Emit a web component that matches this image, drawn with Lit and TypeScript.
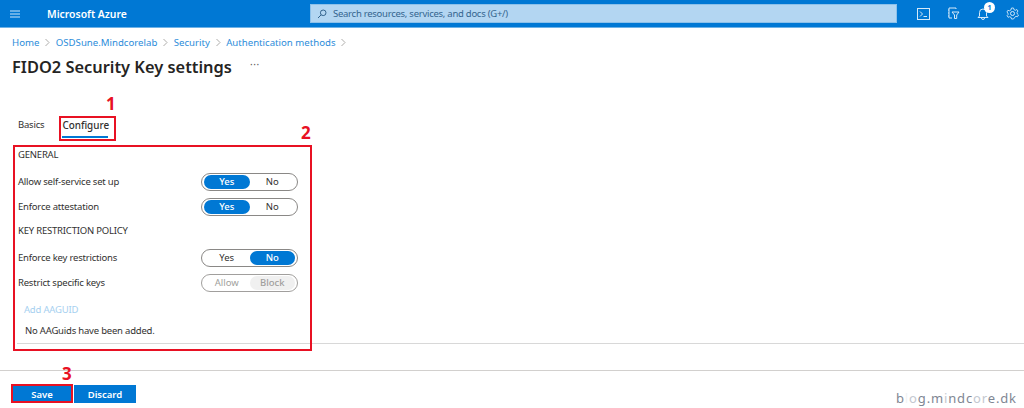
import { LitElement, html, css } from "lit";
import { customElement } from "lit/decorators.js";

const crumbs = ["Home", "OSDSune.Mindcorelab", "Security", "Authentication methods"];

@customElement("app-root")
export class AppRoot extends LitElement {
  static styles = css`
    :host { display: block; position: relative; width: 1024px; height: 408px; overflow: hidden; background: #fff; font-family: "Noto Sans", "Open Sans", sans-serif; color: #323130; font-size: 9.5px; letter-spacing: -0.2px; }
    svg { display: block; }
    .top { height: 27px; background: #0078d4; display: flex; align-items: center; border-bottom: 1px solid #6fb2e6; box-sizing: content-box; }
    .menu { margin-left: 9px; width: 12px; }
    .brand { margin-left: 26px; width: 263px; color: #fff; font-size: 10.4px; font-weight: 600; white-space: nowrap; letter-spacing: 0; }
    .search { width: 587px; height: 19px; background: #b3d6f2; border: 1px solid #8dc1ea; display: flex; align-items: center; gap: 6px; padding-left: 6px; box-sizing: border-box; color: #33658f; font-size: 9.5px; letter-spacing: -0.26px; }
    .icons { display: flex; align-items: center; margin-left: 20px; gap: 17px; }
    .bell { position: relative; }
    .badge { position: absolute; left: 7px; top: -5px; width: 11px; height: 11px; border-radius: 50%; background: #fff; color: #0078d4; font-size: 7px; font-weight: 700; display: flex; align-items: center; justify-content: center; letter-spacing: 0; }
    .crumbs { display: flex; align-items: center; gap: 4.7px; padding: 7px 0 0 12px; height: 14px; color: #0078d4; font-size: 9.65px; opacity: .85; white-space: nowrap; letter-spacing: 0; }
    .chev { width: 7px; }
    .titlebar { display: flex; align-items: center; padding: 5px 0 0 12px; height: 24px; }
    h1 { margin: 0; font-size: 16.4px; font-weight: 600; color: #252423; white-space: nowrap; letter-spacing: 0; }
    .more { margin-left: 18px; color: #605e5c; font-size: 10px; letter-spacing: 0.6px; line-height: 1; margin-bottom: 4px; }
    .tabs { display: flex; gap: 18px; margin: 40px 0 0 18px; height: 28px; }
    .tab { height: 18px; line-height: 14px; color: #323130; font-size: 9.5px; }
    .tab.on { font-weight: 500; font-size: 9.9px; letter-spacing: 0; border-bottom: 2px solid #0078d4; width: 46px; text-align: center; white-space: nowrap; }
    .form { margin: 0 0 0 18px; width: 280px; }
    .head { height: 23px; line-height: 17px; }
    .gap { margin-top: 3px; }
    .row { display: flex; justify-content: space-between; align-items: center; height: 25px; }
    .toggle { display: flex; width: 97px; height: 18px; box-sizing: border-box; border: 1px solid #8a8886; border-radius: 9px; padding: 1px 2px; letter-spacing: 0; }
    .opt { flex: 1; border-radius: 7px; display: flex; align-items: center; justify-content: center; color: #323130; }
    .opt.sel { background: #0078d4; color: #fff; font-weight: 500; }
    .toggle.off { border-color: #a19f9d; }
    .toggle.off .opt { color: #a19f9d; }
    .toggle.off .opt.sel { background: #f0f0f0; color: #a19f9d; }
    .add { margin: 8px 0 0 6px; color: #a6d0f0; height: 14px; line-height: 14px; }
    .none { margin: 7px 0 0 7px; height: 14px; line-height: 14px; }
    .rule1 { margin: 5px 0 0 17px; height: 1px; background: #d8d8d8; }
    .rule2 { margin-top: 26px; height: 1px; background: #d2d0ce; }
    .actions { display: flex; gap: 1px; margin: 14px 0 0 11px; }
    .btn { width: 62px; height: 18px; background: #0078d4; color: #fff; font-weight: 600; display: flex; align-items: center; justify-content: center; letter-spacing: 0; }
    .mark { position: absolute; border: 2px solid #e81123; box-sizing: border-box; pointer-events: none; }
    .m1 { left: 59px; top: 116px; width: 57px; height: 25px; }
    .m2 { left: 13px; top: 145px; width: 299px; height: 206px; }
    .m3 { left: 11px; top: 384px; width: 62px; height: 19px; }
    .num { position: absolute; color: #e81123; font-size: 17px; font-weight: 700; line-height: 1; letter-spacing: 0; }
    .n1 { left: 106px; top: 95px; }
    .n2 { left: 301px; top: 124px; }
    .n3 { left: 62px; top: 365px; }
    .wm { position: absolute; left: 896px; top: 389px; font-size: 13px; color: #7f8693; letter-spacing: 0.85px; white-space: nowrap; }
    .f1 { color: #f2f3f5; }
    .f2 { color: #c3c8d0; }
  `;

  toggle(a: string, b: string, sel: number, off = false) {
    return html`<div class="toggle ${off ? "off" : ""}">
      <div class="opt ${sel === 0 ? "sel" : ""}">${a}</div>
      <div class="opt ${sel === 1 ? "sel" : ""}">${b}</div>
    </div>`;
  }

  render() {
    return html`
      <div class="top">
        <svg class="menu" width="12" height="10" viewBox="0 0 12 10"><path d="M1 2h10M1 5h10M1 8h10" stroke="#cfe6f8" stroke-width="1"/></svg>
        <div class="brand">Microsoft Azure</div>
        <div class="search">
          <svg width="10" height="10" viewBox="0 0 10 10"><circle cx="6.2" cy="3.8" r="2.8" fill="none" stroke="#33658f"/><path d="M4.2 5.8L1 9" stroke="#33658f"/></svg>
          <span>Search resources, services, and docs (G+/)</span>
        </div>
        <div class="icons">
          <svg width="13" height="12" viewBox="0 0 13 12"><rect x=".5" y=".5" width="12" height="11" fill="none" stroke="#d5e9f8"/><path d="M3 3.5L5.5 6 3 8.5M6.500 8.500h3.500" fill="none" stroke="#d5e9f8"/></svg>
          <svg width="13" height="13" viewBox="0 0 13 13"><path d="M9 2V1H2v10h3M1 3h1M1 6h1M1 9h1" fill="none" stroke="#d5e9f8"/><path d="M5 5h7L9.700 8v3.500H7.500V8z" fill="none" stroke="#d5e9f8"/></svg>
          <div class="bell">
            <svg width="12" height="13" viewBox="0 0 12 13"><path d="M6 2a3.500 3.500 0 0 0-3.500 3.500V9L1 10.500h10L9.500 9V5.500A3.500 3.500 0 0 0 6 2zM4.500 11a1.500 1.500 0 0 0 3 0" fill="none" stroke="#d5e9f8"/></svg>
            <div class="badge">1</div>
          </div>
          <svg width="13" height="13" viewBox="0 0 13 13"><circle cx="6.500" cy="6.500" r="2" fill="none" stroke="#d5e9f8"/><path d="M5.500 1h2l.4 1.600 1.500.7 1.500-.8 1.100 1.500-1 1.300.3 1.700 1.200 1-1 1.700-1.500-.4-1.300 1L7.500 12h-2l-.4-1.600-1.500-.7-1.500.6-1-1.700 1-1.100L1.900 6 .9 5l1-1.700 1.500.5 1.500-.8z" fill="none" stroke="#d5e9f8" stroke-width=".9"/></svg>
        </div>
      </div>
      <div class="crumbs">
        ${crumbs.map((c) => html`<span>${c}</span><svg class="chev" width="7" height="9" viewBox="0 0 7 9"><path d="M1.500 1l3.500 3.500L1.500 8" fill="none" stroke="#a19f9d"/></svg>`)}
      </div>
      <div class="titlebar"><h1>FIDO2 Security Key settings</h1><span class="more">···</span></div>
      <div class="tabs">
        <div class="tab">Basics</div>
        <div class="tab on">Configure</div>
      </div>
      <div class="form">
        <div class="head">GENERAL</div>
        <div class="row"><span>Allow self-service set up</span>${this.toggle("Yes", "No", 0)}</div>
        <div class="row"><span>Enforce attestation</span>${this.toggle("Yes", "No", 0)}</div>
        <div class="head gap">KEY RESTRICTION POLICY</div>
        <div class="row"><span>Enforce key restrictions</span>${this.toggle("Yes", "No", 1)}</div>
        <div class="row"><span>Restrict specific keys</span>${this.toggle("Allow", "Block", 1, true)}</div>
        <div class="add">Add AAGUID</div>
        <div class="none">No AAGuids have been added.</div>
      </div>
      <div class="rule1"></div>
      <div class="rule2"></div>
      <div class="actions"><div class="btn">Save</div><div class="btn">Discard</div></div>
      <div class="mark m1"></div><div class="mark m2"></div><div class="mark m3"></div>
      <div class="num n1">1</div><div class="num n2">2</div><div class="num n3">3</div>
      <div class="wm">b<span class="f1">l</span><span class="f2">o</span>g.m<span class="f2">i</span>ndc<span class="f2">or</span>e.dk</div>
    `;
  }
}
